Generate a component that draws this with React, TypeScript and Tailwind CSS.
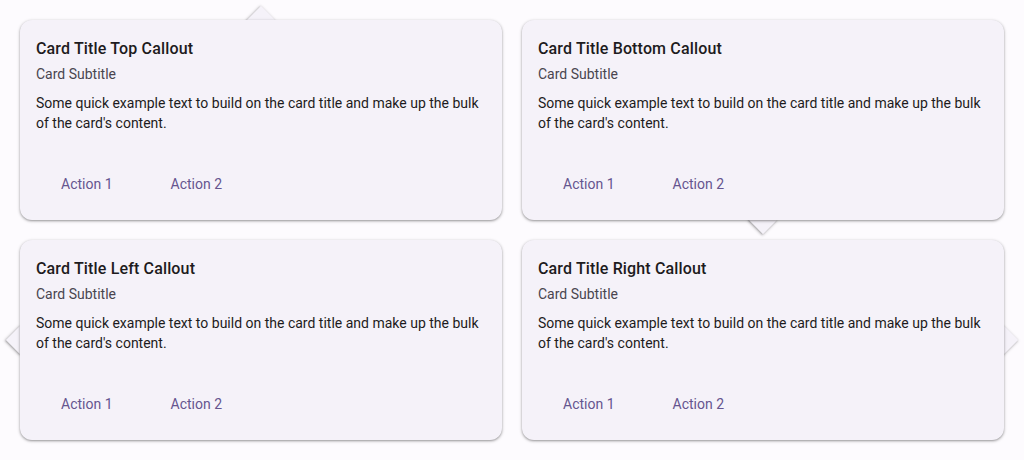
import React from "react";

type Dir = "top" | "bottom" | "left" | "right";

const arrowCls: Record<Dir, string> = {
  top: "left-1/2 top-0 -translate-x-1/2 -translate-y-1/2",
  bottom: "left-1/2 bottom-0 -translate-x-1/2 translate-y-1/2",
  left: "left-0 top-1/2 -translate-x-1/2 -translate-y-1/2",
  right: "right-0 top-1/2 translate-x-1/2 -translate-y-1/2",
};

const titles: Record<Dir, string> = {
  top: "Card Title Top Callout",
  bottom: "Card Title Bottom Callout",
  left: "Card Title Left Callout",
  right: "Card Title Right Callout",
};

function Card({ dir }: { dir: Dir }) {
  return (
    <div className="relative h-[200px] rounded-xl bg-[#f5f2f9] shadow-[0_1px_3px_1px_rgba(0,0,0,0.12),0_1px_2px_rgba(0,0,0,0.28)]">
      <div
        className={`absolute -z-10 h-[20px] w-[20px] rotate-45 bg-[#f5f2f9] shadow-[0_1px_3px_1px_rgba(0,0,0,0.12),0_1px_2px_rgba(0,0,0,0.28)] ${arrowCls[dir]}`}
      />
      <div className="flex h-full flex-col px-4 pt-[17px] pb-4">
        <div className="text-[16px] leading-6 font-medium tracking-[0.15px] text-[#1d1b20]">{titles[dir]}</div>
        <div className="text-[14px] leading-5 text-[#49454f] mt-[3px]">Card Subtitle</div>
        <div className="mt-[9px] text-[14px] leading-5 text-[#1d1b20]">
          Some quick example text to build on the card title and make up the bulk of the card's content.
        </div>
        <div className="mt-auto flex gap-2">
          <button className="h-10 rounded-full px-[25px] text-[14px] text-[#65558f]">Action 1</button>
          <button className="h-10 rounded-full px-[25px] text-[14px] text-[#65558f]">Action 2</button>
        </div>
      </div>
    </div>
  );
}

export default function App() {
  return (
    <div
      className="isolate h-[460px] w-[1024px] bg-[#fdfbfe] p-5"
      style={{ fontFamily: "Roboto, 'Noto Sans', sans-serif" }}
    >
      <div className="grid grid-cols-2 gap-5">
        <Card dir="top" />
        <Card dir="bottom" />
        <Card dir="left" />
        <Card dir="right" />
      </div>
    </div>
  );
}
